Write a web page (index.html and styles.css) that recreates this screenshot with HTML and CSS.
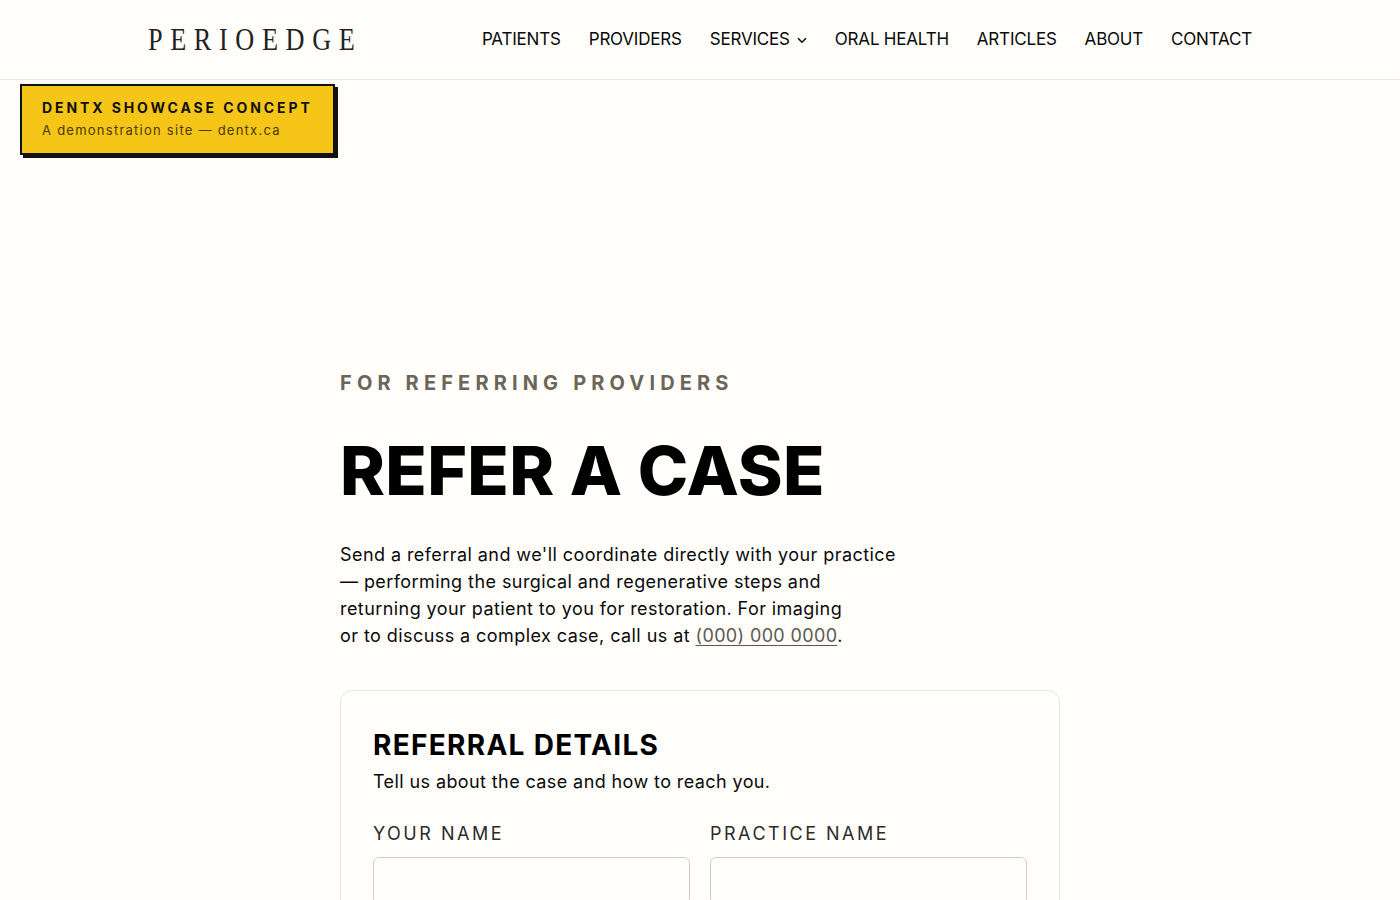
FILE: index.html
```html
<!DOCTYPE html>
<html lang="en">
<head>
<meta charset="utf-8">
<title>PerioEdge — Refer a Case</title>
<link rel="stylesheet" href="styles.css">
</head>
<body>
<header class="site-header">
  <div class="header-inner">
    <a class="logo" href="#">PERIOEDGE</a>
    <nav class="nav">
      <a href="#">PATIENTS</a>
      <a href="#">PROVIDERS</a>
      <a href="#" class="has-caret">SERVICES
        <svg class="caret" width="10" height="7" viewBox="0 0 10 7" aria-hidden="true"><path d="M1 1.2 5 5.2 9 1.2" fill="none" stroke="#111" stroke-width="1.6"/></svg>
      </a>
      <a href="#">ORAL HEALTH</a>
      <a href="#">ARTICLES</a>
      <a href="#">ABOUT</a>
      <a href="#">CONTACT</a>
    </nav>
  </div>
</header>
<aside class="badge">
  <div class="badge-title">DENTX SHOWCASE CONCEPT</div>
  <div class="badge-sub">A demonstration site — dentx.ca</div>
</aside>
<main class="main">
  <p class="eyebrow">FOR REFERRING PROVIDERS</p>
  <h1 class="title">REFER A CASE</h1>
  <p class="lead">Send a referral and we'll coordinate directly with your practice<br>— performing the surgical and regenerative steps and<br>returning your patient to you for restoration. For imaging<br>or to discuss a complex case, call us at <a class="phone" href="#">(000) 000 0000</a>.</p>
  <section class="card">
    <h2 class="card-title">REFERRAL DETAILS</h2>
    <p class="card-sub">Tell us about the case and how to reach you.</p>
    <form class="form-grid">
      <label class="field"><span class="field-label">YOUR NAME</span><input class="input" type="text"></label>
      <label class="field"><span class="field-label">PRACTICE NAME</span><input class="input" type="text"></label>
    </form>
  </section>
</main>
</body>
</html>
```

FILE: styles.css
```css
* { box-sizing: border-box; }
html, body { margin: 0; padding: 0; }
body {
  background: #fffefb;
  color: #0a0a0a;
  font-family: Inter, "Liberation Sans", sans-serif;
  position: relative;
}
a { color: inherit; text-decoration: none; }

.site-header {
  height: 80px;
  border-bottom: 1px solid #ebe9e5;
}
.header-inner {
  width: 1104px;
  height: 78px;
  margin: 0 auto;
  display: flex;
  align-items: center;
  justify-content: space-between;
}
.logo {
  font-family: "Liberation Serif", serif;
  font-size: 32px;
  line-height: 36px;
  letter-spacing: 9.3px;
  color: #222;
  transform: scaleX(0.82);
  transform-origin: left center;
  width: 207px;
  white-space: nowrap;
}
.nav {
  display: flex;
  align-items: center;
  gap: 28px;
  font-size: 17px;
  letter-spacing: -0.2px;
  color: #0a0a0a;
}
.has-caret { display: flex; align-items: center; gap: 7px; }
.caret { display: block; margin-top: 2px; }

.badge {
  position: absolute;
  left: 20px;
  top: 84px;
  width: 315px;
  height: 71px;
  background: #f5c518;
  border: 2px solid #111;
  box-shadow: 3px 3px 0 #111;
  padding: 13px 20px;
}
.badge-title {
  font-size: 14px;
  font-weight: 700;
  letter-spacing: 2.9px;
  line-height: 18px;
  color: #111;
}
.badge-sub {
  margin-top: 4px;
  font-size: 13px;
  letter-spacing: 1.25px;
  line-height: 18px;
  color: #4a3a05;
}

.main {
  width: 720px;
  margin: 0 auto;
  padding-top: 290px;
  padding-bottom: 60px;
}
.eyebrow {
  margin: 0;
  font-size: 20px;
  line-height: 26px;
  font-weight: 700;
  letter-spacing: 5.15px;
  color: #6b6659;
}
.title {
  margin: 36px 0 0;
  font-size: 68px;
  line-height: 76px;
  font-weight: 800;
  letter-spacing: 0.35px;
  color: #000;
}
.lead {
  margin: 33px 0 0;
  font-size: 18px;
  line-height: 27px;
  letter-spacing: 0.43px;
  color: #0a0a0a;
}
.phone {
  letter-spacing: 0.36px;
  color: #5d594e;
  text-decoration: underline;
  text-underline-offset: 3px;
  text-decoration-thickness: 1px;
}
.card {
  margin-top: 41px;
  border: 1px solid #e8e6e1;
  border-radius: 12px;
  padding: 33px 32px 32px;
}
.card-title {
  margin: 0;
  font-size: 28px;
  line-height: 42px;
  font-weight: 700;
  letter-spacing: 1.3px;
  color: #000;
}
.card-sub {
  margin: 2px 0 0;
  font-size: 18px;
  line-height: 27px;
  letter-spacing: 0.4px;
  color: #0a0a0a;
}
.form-grid {
  margin-top: 27px;
  display: grid;
  grid-template-columns: 1fr 1fr;
  gap: 20px;
}
.field { display: block; }
.field-label {
  display: block;
  font-size: 18px;
  line-height: 24px;
  letter-spacing: 2.5px;
  color: #2b2b2b;
}
.input {
  display: block;
  width: 100%;
  height: 48px;
  margin-top: 11px;
  border: 1px solid #cfccc5;
  border-radius: 6px;
  background: #fffefb;
}
```
